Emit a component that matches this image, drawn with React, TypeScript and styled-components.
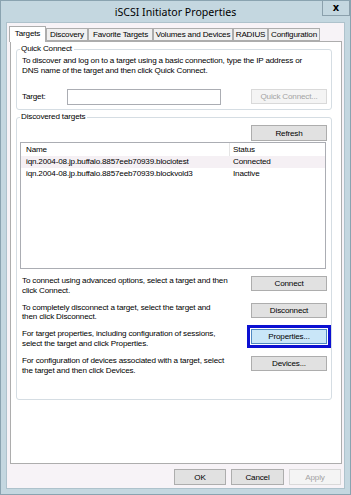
import styled, { createGlobalStyle } from "styled-components";

const GlobalStyle = createGlobalStyle`
  html, body {
    margin: 0;
    padding: 0;
    background: #ffffff;
  }
  body {
    font-family: "Liberation Sans", Arial, sans-serif;
    font-size: 8.1px;
    letter-spacing: -0.17px;
    color: #000000;
  }
  * {
    box-sizing: border-box;
  }
`;

const Frame = styled.div`
  width: 351px;
  height: 495px;
  border: 1px solid #8aa3b0;
  background: #c4d7e0;
  display: flex;
  flex-direction: column;
`;

const TitleBar = styled.div`
  height: 21px;
  flex-shrink: 0;
  display: grid;
  grid-template-columns: 28px 1fr 28px;
  align-items: start;
`;

const Title = styled.div`
  grid-column: 2;
  text-align: center;
  font-family: "Noto Sans", "Open Sans", sans-serif;
  font-size: 10.6px;
  letter-spacing: 0;
  line-height: 22px;
  color: #000000;
`;

const CloseButton = styled.div`
  grid-column: 3;
  height: 15px;
  border: 1px solid #8ba0ac;
  border-top: none;
  display: flex;
  align-items: center;
  justify-content: center;
  font-family: "DejaVu Sans", sans-serif;
  font-weight: bold;
  font-size: 10px;
  line-height: 1;
  color: #000000;
`;

const Client = styled.div`
  flex: 1;
  margin: 0 5px 5px 5px;
  border: 1px solid #aec2cc;
  background: #f7f3f7;
  display: flex;
  flex-direction: column;
  padding: 3px 2px 0 2px;
`;

const TabStrip = styled.div`
  display: flex;
  align-items: flex-end;
  height: 15px;
  position: relative;
  z-index: 1;
`;

const Tab = styled.div<{ $active?: boolean; $w: number }>`
  width: ${(p) => p.$w}px;
  height: ${(p) => (p.$active ? 16 : 13)}px;
  margin-bottom: ${(p) => (p.$active ? -1 : 0)}px;
  border: 1px solid #adadad;
  border-bottom: ${(p) => (p.$active ? "none" : "1px solid #adadad")};
  background: ${(p) => (p.$active ? "#ffffff" : "#f0f0f0")};
  display: flex;
  align-items: center;
  justify-content: center;
  padding-bottom: ${(p) => (p.$active ? 2 : 0)}px;
  white-space: nowrap;
  line-height: 11px;
`;

const Panel = styled.div`
  height: 423px;
  margin: 0 0 0 1px;
  border: 1px solid #adadad;
  background: #ffffff;
  display: flex;
  flex-direction: column;
  padding: 0 9px 0 5px;
`;

const Group = styled.div<{ $top: number; $h: number }>`
  margin-top: ${(p) => p.$top}px;
  height: ${(p) => p.$h}px;
  border: 1px solid #d5dde3;
  border-radius: 3px;
  display: flex;
  flex-direction: column;
  padding: 0 4px 0 3px;
`;

const Caption = styled.div`
  align-self: flex-start;
  margin: -6px 0 0 0;
  padding: 0 2px 0 1px;
  background: #ffffff;
  line-height: 10px;
  white-space: nowrap;
`;

const Info = styled.div<{ $top?: number }>`
  margin-top: ${(p) => p.$top ?? 0}px;
  padding-left: 2px;
  line-height: 9.5px;
  white-space: nowrap;
`;

const TargetRow = styled.div`
  display: flex;
  align-items: flex-start;
  justify-content: space-between;
  margin-top: 14px;
`;

const TargetField = styled.div`
  display: flex;
  align-items: flex-start;
`;

const FieldLabel = styled.label`
  width: 47px;
  padding-left: 2px;
  line-height: 16px;
`;

const Input = styled.div`
  width: 154px;
  height: 16px;
  border: 1px solid #abadb3;
  background: #ffffff;
`;

const Button = styled.div<{ $w?: number; $disabled?: boolean; $focused?: boolean; $h?: number }>`
  width: ${(p) => p.$w ?? 76}px;
  height: ${(p) => p.$h ?? 15}px;
  flex-shrink: 0;
  border: 1px solid
    ${(p) => (p.$disabled ? "#d9d9d9" : p.$focused ? "#4f88c2" : "#adadad")};
  background: ${(p) =>
    p.$disabled ? "#f4f4f4" : p.$focused ? "#c9e6f8" : "#e1e1e1"};
  color: ${(p) => (p.$disabled ? "#a3a3a3" : "#000000")};
  outline: ${(p) => (p.$focused ? "3px solid #0c10d2" : "none")};
  outline-offset: 1px;
  display: flex;
  align-items: center;
  justify-content: center;
  white-space: nowrap;
`;

const RefreshRow = styled.div`
  display: flex;
  justify-content: flex-end;
  margin-top: 3px;
`;

const List = styled.div`
  margin: 1px 1px 0 0;
  height: 127px;
  border: 1px solid #abadb3;
  background: #ffffff;
  display: flex;
  flex-direction: column;
`;

const ListRow = styled.div<{ $header?: boolean; $selected?: boolean }>`
  display: grid;
  grid-template-columns: 208px 1px 1fr;
  height: ${(p) => (p.$header ? 13 : 12)}px;
  line-height: ${(p) => (p.$header ? 13 : 12)}px;
  background: ${(p) => (p.$selected ? "#f5f0f4" : "transparent")};
  white-space: nowrap;
`;

const Cell = styled.div<{ $pad: number }>`
  padding-left: ${(p) => p.$pad}px;
  overflow: hidden;
`;

const Divider = styled.div<{ $show?: boolean }>`
  background: ${(p) => (p.$show ? "#e5e5e5" : "transparent")};
`;

const Actions = styled.div`
  margin-top: 7px;
  display: flex;
  flex-direction: column;
`;

const ActionRow = styled.div`
  height: 26.7px;
  display: flex;
  align-items: flex-start;
  justify-content: space-between;
`;

const Footer = styled.div`
  display: flex;
  justify-content: flex-end;
  gap: 5px;
  margin-top: 5px;
  padding-right: 1px;
`;

const tabs = [
  { label: "Targets", w: 37, active: true },
  { label: "Discovery", w: 42 },
  { label: "Favorite Targets", w: 65 },
  { label: "Volumes and Devices", w: 80 },
  { label: "RADIUS", w: 35 },
  { label: "Configuration", w: 52 },
];

const targets = [
  { name: "iqn.2004-08.jp.buffalo.8857eeb70939.blociotest", status: "Connected" },
  { name: "iqn.2004-08.jp.buffalo.8857eeb70939.blockvold3", status: "Inactive" },
];

const actions = [
  {
    text: ["To connect using advanced options, select a target and then", "click Connect."],
    button: "Connect",
  },
  {
    text: ["To completely disconnect a target, select the target and", "then click Disconnect."],
    button: "Disconnect",
  },
  {
    text: ["For target properties, including configuration of sessions,", "select the target and click Properties."],
    button: "Properties...",
    focused: true,
  },
  {
    text: ["For configuration of devices associated with a target, select", "the target and then click Devices."],
    button: "Devices...",
  },
];

export default function App() {
  return (
    <>
      <GlobalStyle />
      <Frame>
        <TitleBar>
          <Title>iSCSI Initiator Properties</Title>
          <CloseButton>x</CloseButton>
        </TitleBar>
        <Client>
          <TabStrip>
            {tabs.map((t) => (
              <Tab key={t.label} $active={t.active} $w={t.w}>
                {t.label}
              </Tab>
            ))}
          </TabStrip>
          <Panel>
            <Group $top={7} $h={61}>
              <Caption>Quick Connect</Caption>
              <Info $top={2}>
                To discover and log on to a target using a basic connection, type the IP address or
                <br />
                DNS name of the target and then click Quick Connect.
              </Info>
              <TargetRow>
                <TargetField>
                  <FieldLabel>Target:</FieldLabel>
                  <Input />
                </TargetField>
                <Button $disabled>Quick Connect...</Button>
              </TargetRow>
            </Group>
            <Group $top={7} $h={283}>
              <Caption>Discovered targets</Caption>
              <RefreshRow>
                <Button $h={16}>Refresh</Button>
              </RefreshRow>
              <List>
                <ListRow $header>
                  <Cell $pad={5}>Name</Cell>
                  <Divider $show />
                  <Cell $pad={3}>Status</Cell>
                </ListRow>
                {targets.map((t, i) => (
                  <ListRow key={t.name} $selected={i === 0}>
                    <Cell $pad={5}>{t.name}</Cell>
                    <Divider />
                    <Cell $pad={3}>{t.status}</Cell>
                  </ListRow>
                ))}
              </List>
              <Actions>
                {actions.map((a) => (
                  <ActionRow key={a.button}>
                    <Info>
                      {a.text[0]}
                      <br />
                      {a.text[1]}
                    </Info>
                    <Button $focused={a.focused}>{a.button}</Button>
                  </ActionRow>
                ))}
              </Actions>
            </Group>
          </Panel>
          <Footer>
            <Button $w={52} $h={16}>OK</Button>
            <Button $w={53} $h={16}>Cancel</Button>
            <Button $w={52} $h={16} $disabled>Apply</Button>
          </Footer>
        </Client>
      </Frame>
    </>
  );
}
